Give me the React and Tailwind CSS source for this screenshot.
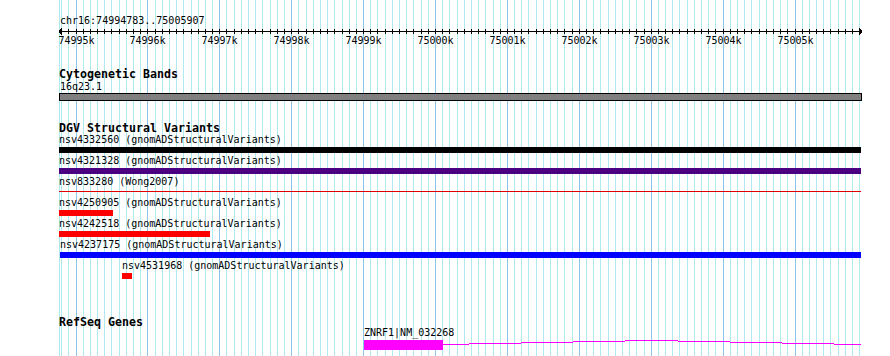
import React from "react";

const MAJOR0 = 76;
const STEP = 7.19;
const gx = (k) => Math.floor(MAJOR0 + k * STEP);

const majors = [
  "74995k", "74996k", "74997k", "74998k", "74999k", "75000k",
  "75001k", "75002k", "75003k", "75004k", "75005k",
];

function Grid() {
  const lines = [];
  for (let k = -2; k <= 109; k++) {
    const x = gx(k) + 0.5;
    const major = k % 10 === 0;
    lines.push(
      <line key={k} x1={x} x2={x} y1={0} y2={356} stroke={major ? "#8ec5ea" : "#aeeaf0"} strokeWidth={1} />
    );
  }
  return (
    <svg className="absolute left-0 top-0" width={890} height={356} shapeRendering="crispEdges">
      <line x1={59.5} x2={59.5} y1={0} y2={356} stroke="#aeeaf0" />
      {lines}
    </svg>
  );
}

function Ruler() {
  const ticks = [];
  for (let k = -2; k <= 109; k++) {
    const x = gx(k) + 0.5;
    ticks.push(<line key={k} x1={x} x2={x} y1={3} y2={8} stroke="#000" />);
  }
  return (
    <svg width={890} height={10} className="block" shapeRendering="crispEdges">
      <line x1={59} x2={862} y1={5.5} y2={5.5} stroke="#000" />
      {ticks}
      <line x1={59} y1={5.5} x2={62} y2={2.5} stroke="#000" />
      <line x1={59} y1={5.5} x2={62} y2={8.5} stroke="#000" />
      <line x1={862} y1={5.5} x2={859} y2={2.5} stroke="#000" />
      <line x1={862} y1={5.5} x2={859} y2={8.5} stroke="#000" />
    </svg>
  );
}

const features = [
  { name: "nsv4332560 (gnomADStructuralVariants)", x0: 59, x1: 861, kind: "bar", color: "#000000" },
  { name: "nsv4321328 (gnomADStructuralVariants)", x0: 59, x1: 861, kind: "bar", color: "#4b0082" },
  { name: "nsv833280 (Wong2007)", x0: 59, x1: 861, kind: "line", color: "#e00000" },
  { name: "nsv4250905 (gnomADStructuralVariants)", x0: 59, x1: 113, kind: "bar", color: "#ff0000" },
  { name: "nsv4242518 (gnomADStructuralVariants)", x0: 59, x1: 210, kind: "bar", color: "#ff0000" },
  { name: "nsv4237175 (gnomADStructuralVariants)", x0: 60, x1: 861, kind: "bar", color: "#0000ff" },
  { name: "nsv4531968 (gnomADStructuralVariants)", x0: 122, x1: 132, kind: "bar", color: "#ff0000" },
];

const geneSegs = [
  [443, 469, 344], [469, 521, 343], [521, 573, 342], [573, 625, 341], [625, 678, 340],
  [678, 730, 341], [730, 782, 342], [782, 834, 343], [834, 861, 344],
];

function Feature({ f }) {
  return (
    <div className="h-[21px] flex flex-col" style={{ marginLeft: f.x0 }}>
      <div className="h-[10px] leading-[10px] text-[10px] whitespace-nowrap">{f.name}</div>
      {f.kind === "bar" ? (
        <div className="mt-[2px] h-[6px]" style={{ width: f.x1 - f.x0, backgroundColor: f.color }} />
      ) : (
        <div className="mt-[4px] h-[1px]" style={{ width: f.x1 - f.x0, backgroundColor: f.color }} />
      )}
    </div>
  );
}

export default function App() {
  return (
    <div
      className="relative w-[890px] h-[356px] overflow-hidden bg-white text-black"
      style={{ fontFamily: '"DejaVu Sans Mono", "Liberation Mono", monospace' }}
    >
      <Grid />
      <div className="relative flex flex-col">
        <div className="mt-[16px] pl-[60px] h-[10px] leading-[10px] text-[10px]">chr16:74994783..75005907</div>
        <Ruler />
        <div className="relative h-[10px] leading-[10px] text-[10px]">
          {majors.map((m, i) => (
            <span
              key={m}
              className="absolute top-0 -translate-x-1/2 whitespace-nowrap"
              style={{ left: Math.floor(MAJOR0 + i * 71.9) + 0.5 }}
            >
              {m}
            </span>
          ))}
        </div>

        <div className="mt-[22px] pl-[59px] h-[12px] leading-[12px] text-[11.63px] font-bold">Cytogenetic Bands</div>
        <div className="mt-[2px] pl-[60px] h-[10px] leading-[10px] text-[10px]">16q23.1</div>
        <div className="mt-[1px] ml-[59px] w-[803px] h-[8px] bg-[#808080] border border-black" />

        <div className="mt-[21px] pl-[59px] h-[12px] leading-[12px] text-[11.63px] font-bold">DGV Structural Variants</div>
        <div className="mt-[1px] flex flex-col">
          {features.map((f) => (
            <Feature key={f.name} f={f} />
          ))}
        </div>

        <div className="mt-[34px] pl-[59px] h-[12px] leading-[12px] text-[11.63px] font-bold">RefSeq Genes</div>
        <div className="relative ml-[364px] flex flex-col">
          <div className="h-[10px] leading-[10px] text-[10px] whitespace-nowrap">ZNRF1|NM_032268</div>
          <div className="mt-[2px] w-[79px] h-[10px] bg-[#ff00ff]" />
        </div>
      </div>
      <svg className="absolute left-0 top-0" width={890} height={356} shapeRendering="crispEdges">
        {geneSegs.map(([a, b, y]) => (
          <line key={a} x1={a} x2={b} y1={y + 0.5} y2={y + 0.5} stroke="#ff00ff" />
        ))}
      </svg>
    </div>
  );
}
